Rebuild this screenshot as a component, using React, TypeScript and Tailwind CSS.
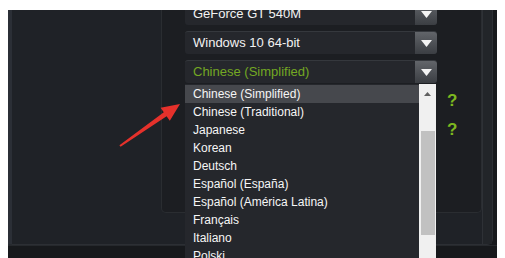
import React from "react";

const items = [
  "Chinese (Simplified)",
  "Chinese (Traditional)",
  "Japanese",
  "Korean",
  "Deutsch",
  "Español (España)",
  "Español (América Latina)",
  "Français",
  "Italiano",
  "Polski",
  "Português (Brasil)",
];

function Arrow() {
  return (
    <div className="w-[22px] h-full rounded-r-[3px] bg-gradient-to-b from-[#62656a] to-[#3b3e43] flex items-center justify-center">
      <svg width="11" height="7" viewBox="0 0 11 7">
        <polygon points="0,0 11,0 5.5,7" fill="#f4f4f4" />
      </svg>
    </div>
  );
}

function Select({ label, green, children }: { label: string; green?: boolean; children?: React.ReactNode }) {
  return (
    <div className="relative w-[252px] h-[23px]">
      <div className="w-full h-full flex rounded-[3px] bg-[#25272c] border-t border-[#35383d]">
        <div
          className={
            "flex-1 flex items-center pl-[8px] text-[13px] " +
            (green ? "text-[#74a823]" : "text-[#f2f2f2]")
          }
        >
          {label}
        </div>
        <Arrow />
      </div>
      {children}
    </div>
  );
}

function Q() {
  return <div className="ml-[10px] text-[17px] font-bold text-[#7cb81f] leading-none">?</div>;
}

export default function App() {
  return (
    <div
      className="w-[505px] h-[258px] bg-white pt-[10px] px-[8px] flex overflow-hidden"
      style={{ fontFamily: '"Liberation Sans", Arial, sans-serif' }}
    >
      <div className="relative flex-1 bg-[#17191c] flex flex-col overflow-hidden">
        <div className="w-[485px] h-[235px] flex bg-[#1f2227] border-l-4 border-[#2b2f36] border-r border-b border-r-[#2c2f34] border-b-[#2c2f34] rounded-br-[6px]">
          <div className="w-[149px] h-full" />
          <div className="w-[321px] h-[203px] bg-[#1c1e22] border-l border-r border-b border-[#2a2d31] rounded-b-[5px] pl-[23px]">
            <div className="mt-[-8px] flex flex-col gap-[6px]">
              <div className="flex items-center h-[23px]">
                <Select label="GeForce GT 540M" />
              </div>
              <div className="flex items-center h-[23px]">
                <Select label="Windows 10 64-bit" />
              </div>
              <div className="relative z-10 flex items-center h-[23px]">
                <Select label="Chinese (Simplified)" green>
                  <div className="absolute left-0 top-[24px] w-[251px] h-[200px] bg-[#25272c] flex">
                    <div className="flex-1 flex flex-col pt-[1px]">
                      {items.map((it, i) => (
                        <div
                          key={it}
                          className={
                            "h-[18px] flex items-center pl-[8px] text-[12px] text-[#f6f6f6] " +
                            (i === 0 ? "bg-[#46484d]" : "")
                          }
                        >
                          {it}
                        </div>
                      ))}
                    </div>
                    <div className="w-[17px] bg-[#f0f0f0] flex flex-col items-center">
                      <div className="h-[20px] flex items-center justify-center">
                        <svg width="7" height="4" viewBox="0 0 7 4">
                          <polygon points="0,4 7,4 3.5,0" fill="#606060" />
                        </svg>
                      </div>
                      <div className="mt-[27px] w-[14px] h-[104px] bg-[#c1c1c1]" />
                    </div>
                  </div>
                </Select>
              </div>
              <div className="flex items-center h-[23px]">
                <div className="w-[252px]" />
                <Q />
              </div>
              <div className="flex items-center h-[23px]">
                <div className="w-[252px]" />
                <Q />
              </div>
            </div>
          </div>
          <div className="flex-1 h-full border-l border-[#2e3136] bg-[#222529]" />
        </div>
        <div className="flex-1 bg-[#17191c] border-t border-[#26292d]" />
        <svg className="absolute left-0 top-0 pointer-events-none" width="489" height="248" viewBox="8 10 489 248">
          <polygon
            points="119.4,145.2 163.8,112.3 160.6,107.8 180,104 169.8,120.8 166.6,116.3 120.6,146.8"
            fill="#e5312b"
          />
        </svg>
      </div>
    </div>
  );
}
